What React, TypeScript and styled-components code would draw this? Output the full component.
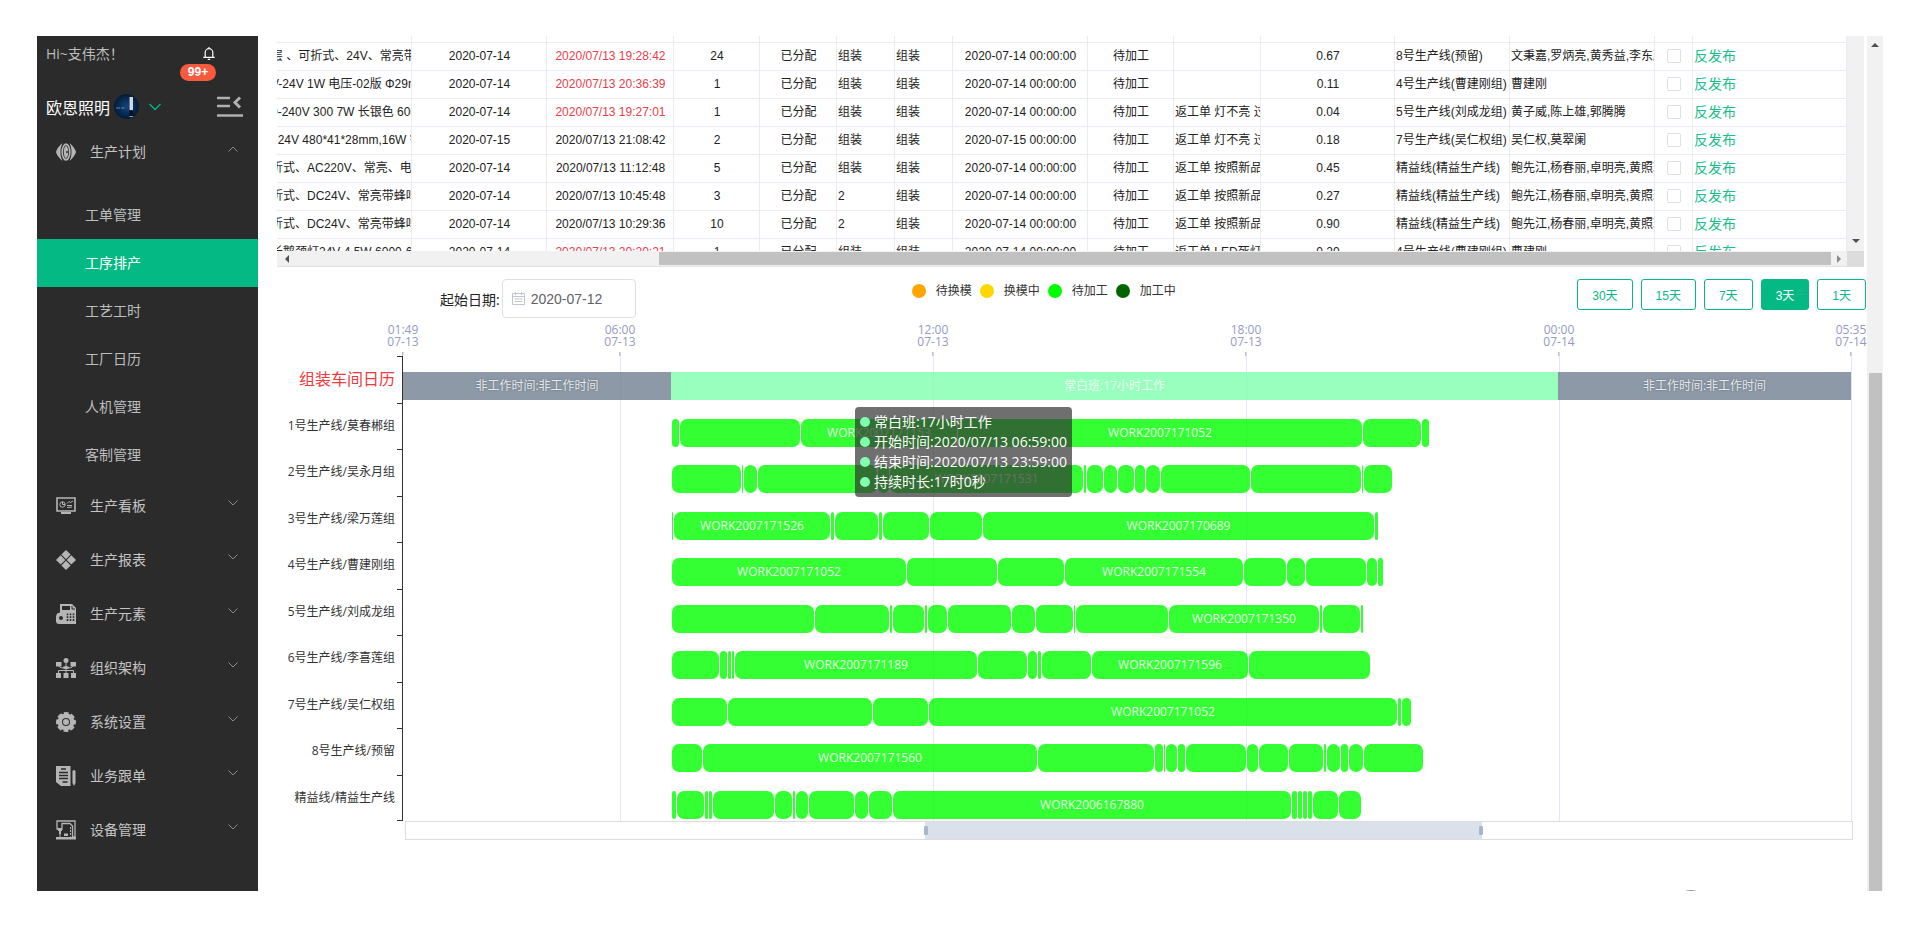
import React, { useState } from 'react';
import styled, { createGlobalStyle } from 'styled-components';

const GREEN = '#04b983';
const UI_FONT = '"Open Sans", "Noto Sans CJK SC", sans-serif';
const TABLE_FONT = '"Liberation Sans", "Noto Sans CJK SC", sans-serif';

const GlobalStyle = createGlobalStyle`
  *, *::before, *::after { box-sizing: border-box; }
  body { margin: 0; background: #fff; font-family: ${UI_FONT}; font-size: 12px; color: #222; }
  button, input { font-family: inherit; }
`;

/* ---------- shell ---------- */

const Page = styled.div`
  display: flex;
  height: 100vh;
  padding: 36px 37px 45px;
`;

const Main = styled.main`
  position: relative;
  flex: 1;
  min-width: 0;
  display: flex;
  flex-direction: column;
  padding-left: 19px;
  overflow: hidden;
`;

const FloatingDisc = styled.div`
  position: absolute;
  right: 160px;
  bottom: -31px;
  width: 32px;
  height: 32px;
  border-radius: 50%;
  background: #999;
`;

/* ---------- sidebar ---------- */

const Sidebar = styled.aside`
  flex: 0 0 221px;
  background: #2b2b2b;
  color: #bdbdbd;
  overflow: hidden;
`;

const Greeting = styled.div`
  display: flex;
  align-items: center;
  justify-content: space-between;
  height: 34px;
  padding: 0 43px 0 9px;
  font-size: 14px;
`;

const BellButton = styled.button`
  position: relative;
  display: flex;
  padding: 0;
  border: 0;
  background: none;
  color: #fff;
`;

const Badge = styled.span`
  position: absolute;
  top: 17px;
  right: -1px;
  width: 36px;
  height: 17px;
  border-radius: 9px;
  background: #f85a40;
  color: #fff;
  font: bold 12px/17px "Liberation Sans", sans-serif;
  text-align: center;
`;

const Company = styled.div`
  display: flex;
  align-items: center;
  height: 55px;
  padding: 18px 15px 0 9px;
  color: #fff;
  font-size: 16px;
  line-height: 24px;
`;

const CompanyButton = styled.button`
  display: flex;
  align-items: center;
  gap: 4px;
  margin-right: auto;
  padding: 0;
  border: 0;
  background: none;
  color: inherit;
  font-size: 16px;

  svg:last-child { margin-left: 6px; }
`;

const PlainButton = styled.button`
  display: flex;
  padding: 0;
  border: 0;
  background: none;
  color: #b0b0b0;
`;

const MenuGroup = styled.a`
  display: flex;
  align-items: center;
  height: 54px;
  padding: 0 19px;
  color: #c4c4c4;
  font-size: 14px;
  text-decoration: none;
`;

const MenuText = styled.span`
  flex: 1;
  margin-left: 14px;
  padding-bottom: 2px;
`;

const MenuArrow = styled.svg`
  margin-bottom: 6px;
`;

const SubMenu = styled.nav`
  padding: 12px 0 0;
`;

const SubItem = styled.a<{ $active?: boolean }>`
  display: block;
  padding: 1px 0 1px 48px;
  background: ${(p) => (p.$active ? GREEN : 'transparent')};
  color: ${(p) => (p.$active ? '#fff' : '#bdbdbd')};
  font-size: 14px;
  line-height: 46px;
  text-decoration: none;
`;

/* ---------- table ---------- */

const TablePanel = styled.section`
  display: grid;
  grid-template-columns: 1fr 17px;
  grid-template-rows: 215px 15px;
  margin-right: 3px;
  border-bottom: 1px solid #e2e2e2;
`;

const TableClip = styled.div`
  display: flex;
  justify-content: flex-end;
  min-width: 0;
  overflow: hidden;
`;

const OrderTable = styled.table`
  flex: none;
  width: calc(100% + 7px);
  align-self: flex-start;
  border-collapse: separate;
  border-spacing: 0;
  table-layout: fixed;
  font-family: ${TABLE_FONT};
  font-size: 12px;
  color: #222;
`;

const Cell = styled.td<{ $center?: boolean; $late?: boolean }>`
  height: 28px;
  padding: 0 0 2px 1px;
  border-right: 1px solid #ebebf4;
  border-bottom: 1px solid #ebebf4;
  overflow: hidden;
  white-space: nowrap;
  line-height: 20px;
  text-align: ${(p) => (p.$center ? 'center' : 'left')};
  color: ${(p) => (p.$late ? '#e8404a' : 'inherit')};
`;

const PrecedingRow = styled.tr`
  td { height: 7px; padding: 0; }
`;

const Tick = styled.input`
  appearance: none;
  display: block;
  width: 14px;
  height: 14px;
  margin: 0 auto;
  border: 1px solid #dcdfe6;
  border-radius: 2px;
  background: #fff;
`;

const LinkButton = styled.button`
  display: block;
  padding: 0;
  border: 0;
  background: none;
  color: #19bd8b;
  font-size: 14px;
  line-height: 20px;
`;

const VScroll = styled.div`
  display: flex;
  flex-direction: column;
  justify-content: flex-end;
  align-items: center;
  padding-bottom: 6px;
  background: #f1f1f1;
`;

const HScroll = styled.div`
  display: flex;
  align-items: center;
  background: #f1f1f1;
`;

const HThumb = styled.div`
  flex: 1172;
  height: 13px;
  background: #c1c1c1;
`;

const HLead = styled.div`
  flex: 376;
  padding-left: 6px;
  display: flex;
`;

const HEnd = styled.div`
  flex: 0 0 16px;
  display: flex;
  justify-content: center;
`;

const Corner = styled.div`
  background: #dcdcdc;
`;

const PageScroll = styled.div`
  flex: 0 0 16px;
  display: flex;
  flex-direction: column;
  align-items: center;
  background: #f1f1f1;
`;

const PageScrollLead = styled.div`
  flex: 334;
  padding-top: 5px;
  display: flex;
  align-items: flex-start;
`;

const PageThumb = styled.div`
  flex: 520;
  width: 13px;
  background: #c1c1c1;
`;

/* ---------- toolbar ---------- */

const Toolbar = styled.div`
  display: flex;
  align-items: flex-start;
  height: 57px;
  padding: 12px 0 0 163px;
`;

const Spacer = styled.div<{ $grow: number }>`
  flex: ${(p) => p.$grow};
`;

const DateField = styled.div`
  display: flex;
  align-items: center;
  gap: 2px;
  height: 39px;
  font-size: 14px;
`;

const DateBox = styled.div`
  display: flex;
  align-items: center;
  gap: 6px;
  width: 134px;
  height: 39px;
  padding-left: 9px;
  border: 1px solid #dcdfe6;
  border-radius: 4px;
  color: #606266;
`;

const DateInput = styled.input`
  width: 90px;
  padding: 0;
  border: 0;
  outline: 0;
  background: none;
  color: #606266;
  font-family: "Liberation Sans", sans-serif;
  font-size: 14px;
`;

const Legend = styled.ul`
  display: flex;
  gap: 8px;
  margin: 0;
  padding: 0;
  list-style: none;
`;

const LegendItem = styled.li<{ $color: string }>`
  display: flex;
  align-items: center;
  gap: 10px;
  line-height: 24px;
  color: #333;

  &::before {
    content: "";
    width: 14px;
    height: 14px;
    border-radius: 50%;
    background: ${(p) => p.$color};
  }
`;

const RangeButtons = styled.div`
  display: flex;
  gap: 8px;
  margin-right: 1px;
`;

const RangeButton = styled.button<{ $active: boolean }>`
  height: 31px;
  padding: 0 14px;
  border: 1px solid ${GREEN};
  border-radius: 3px;
  background: ${(p) => (p.$active ? GREEN : '#fff')};
  color: ${(p) => (p.$active ? '#fff' : GREEN)};
  font-family: ${TABLE_FONT};
  font-size: 12px;
  white-space: nowrap;
`;

/* ---------- gantt chart ---------- */

const Chart = styled.section`
  display: grid;
  grid-template-columns: 126px 1fr;
  grid-template-rows: 32px 465px;
  padding-right: 16px;
`;

const TimeAxis = styled.div`
  grid-column: 2;
  position: relative;
`;

const TimeLabel = styled.div`
  position: absolute;
  top: 0;
  bottom: 0;
  transform: translateX(-50%);
  color: #9599c4;
  line-height: 12px;
  text-align: center;
  white-space: pre;

  &::after {
    content: "";
    display: block;
    width: 1px;
    height: 4px;
    margin: 4px auto 0;
    background: #9599c4;
  }
`;

const LineLabels = styled.div`
  display: flex;
  flex-direction: column;
  border-right: 1px solid #333;
`;

const LineLabel = styled.div<{ $title?: boolean }>`
  position: relative;
  flex: 1;
  padding: 14px 7px 0 0;
  color: ${(p) => (p.$title ? '#ee3b40' : '#333')};
  font-size: ${(p) => (p.$title ? 16 : 12)}px;
  line-height: 18px;
  text-align: right;
  white-space: nowrap;

  &::before, &:last-child::after {
    content: "";
    position: absolute;
    top: 0;
    right: 0;
    width: 5px;
    height: 1px;
    background: #333;
  }
  &:last-child::after { top: auto; bottom: 0; }
`;

const Plot = styled.div`
  position: relative;
  display: flex;
  flex-direction: column;
`;

const GridLine = styled.div`
  position: absolute;
  top: 0;
  bottom: 0;
  width: 1px;
  background: #e6e6fa;
`;

const Track = styled.div`
  position: relative;
  flex: 1;
  display: flex;
  padding-top: 16px;
`;

const Shift = styled.div<{ $working?: boolean }>`
  height: 28px;
  background: ${(p) => (p.$working ? 'rgba(128, 255, 174, 0.8)' : 'rgba(112, 128, 144, 0.8)')};
  color: ${(p) => (p.$working ? '#e9fff1' : '#e6eaee')};
  line-height: 27px;
  text-align: center;
  text-shadow: ${(p) => (p.$working ? 'none' : '0 0 2px #56626f')};
  white-space: nowrap;
`;

const Job = styled.div`
  height: 28px;
  margin-left: 1px;
  border-radius: 7px;
  background: rgba(0, 255, 0, 0.8);
  color: #e4ffe4;
  line-height: 27px;
  text-align: center;
  white-space: nowrap;
`;

const Tooltip = styled.div`
  position: absolute;
  top: 51px;
  padding: 5px;
  border-radius: 4px;
  background: rgba(50, 50, 50, 0.7);
  color: #fff;
  font-size: 14px;
  line-height: 20px;
  white-space: nowrap;
`;

const TooltipLine = styled.div`
  display: flex;
  align-items: center;
  gap: 4px;

  &::before {
    content: "";
    width: 10px;
    height: 10px;
    border-radius: 50%;
    background: #80ffae;
  }
`;

const ZoomBar = styled.div`
  position: relative;
  display: flex;
  height: 19px;
  margin: 0 14px 0 128px;
  border: 1px solid #ddd;
`;

const ZoomWindow = styled.div`
  background: #dbe1ea;
`;

const ZoomHandle = styled.input`
  appearance: none;
  position: absolute;
  inset: 0;
  width: 100%;
  height: 100%;
  margin: 0;
  background: none;
  pointer-events: none;

  &::-webkit-slider-thumb {
    appearance: none;
    width: 4px;
    height: 9px;
    border-radius: 1px;
    background: #a7b7cc;
    pointer-events: auto;
  }
`;

/* ---------- data ---------- */

const columns = [142, 135, 127, 86, 77, 58, 58, 135, 86, 87, 134, 115, 145, 38];

type Order = [string, string, string, boolean, string, string, string, string, string, string, string];

const orders: Order[] = [
  ['层 、可折式、24V、常亮带蜂鸣', '2020-07-14', '2020/07/13 19:28:42', true, '24', '组装', '2020-07-14', '', '0.67', '8号生产线(预留)', '文秉嘉,罗炳亮,黄秀益,李东蔚'],
  ['V-24V 1W 电压-02版 Φ29mm', '2020-07-14', '2020/07/13 20:36:39', true, '1', '组装', '2020-07-14', '', '0.11', '4号生产线(曹建刚组)', '曹建刚'],
  ['0-240V 300 7W 长银色 6000K', '2020-07-14', '2020/07/13 19:27:01', true, '1', '组装', '2020-07-14', '返工单 灯不亮 过期', '0.04', '5号生产线(刘成龙组)', '黄子威,陈上雄,郭腾腾'],
  ['/ 24V 480*41*28mm,16W 铝材', '2020-07-15', '2020/07/13 21:08:42', false, '2', '组装', '2020-07-15', '返工单 灯不亮 过期', '0.18', '7号生产线(吴仁权组)', '吴仁权,莫翠阑'],
  ['折式、AC220V、常亮、电源线', '2020-07-14', '2020/07/13 11:12:48', false, '5', '组装', '2020-07-14', '返工单 按照新品包装', '0.45', '精益线(精益生产线)', '鲍先江,杨春丽,卓明亮,黄照琼'],
  ['折式、DC24V、常亮带蜂鸣器', '2020-07-14', '2020/07/13 10:45:48', false, '3', '2', '2020-07-14', '返工单 按照新品包装', '0.27', '精益线(精益生产线)', '鲍先江,杨春丽,卓明亮,黄照琼'],
  ['折式、DC24V、常亮带蜂鸣器', '2020-07-14', '2020/07/13 10:29:36', false, '10', '2', '2020-07-14', '返工单 按照新品包装', '0.90', '精益线(精益生产线)', '鲍先江,杨春丽,卓明亮,黄照琼'],
  ['长鹅颈灯24V 4.5W 6000-6500K', '2020-07-14', '2020/07/13 20:20:21', true, '1', '组装', '2020-07-14', '返工单 LED死灯', '0.20', '4号生产线(曹建刚组)', '曹建刚'],
];

const legend = [
  ['待换模', '#ffa500'],
  ['换模中', '#ffd700'],
  ['待加工', '#00ff00'],
  ['加工中', '#006400'],
];

/* Chart units: the visible window spans SPAN units, starting at 0. */
const SPAN = 1448;
const pct = (n: number) => `${(n / SPAN) * 100}%`;

const timeMarks: [number, string][] = [
  [0, '01:49\n07-13'],
  [217, '06:00\n07-13'],
  [530, '12:00\n07-13'],
  [843, '18:00\n07-13'],
  [1156, '00:00\n07-14'],
  [1448, '05:35\n07-14'],
];

interface Line {
  name: string;
  edges: number[];
  labels: Record<number, string>;
}

const lines: Line[] = [
  { name: '1号生产线/莫春郴组', edges: [268, 276, 397, 554, 959, 1018, 1026], labels: { 2: 'WORK2007171153', 3: 'WORK2007171052' } },
  { name: '2号生产线/吴永月组', edges: [268, 338, 340, 354, 474, 486, 680, 683, 700, 714, 731, 742, 757, 847, 958, 960, 989], labels: { 5: 'WORK2007171531' } },
  { name: '3号生产线/梁万莲组', edges: [268, 270, 427, 431, 475, 479, 526, 579, 971, 975], labels: { 1: 'WORK2007171526', 7: 'WORK2007170689' } },
  { name: '4号生产线/曹建刚组', edges: [268, 503, 594, 661, 840, 883, 902, 963, 974, 980], labels: { 0: 'WORK2007171052', 3: 'WORK2007171554' } },
  { name: '5号生产线/刘成龙组', edges: [268, 411, 486, 489, 521, 524, 544, 608, 632, 670, 672, 765, 916, 919, 957, 960], labels: { 11: 'WORK2007171350' } },
  { name: '6号生产线/李喜莲组', edges: [268, 316, 324, 328, 331, 574, 624, 634, 638, 688, 845, 967], labels: { 4: 'WORK2007171189', 9: 'WORK2007171596' } },
  { name: '7号生产线/吴仁权组', edges: [268, 324, 469, 525, 994, 998, 1008], labels: { 3: 'WORK2007171052' } },
  { name: '8号生产线/预留', edges: [268, 299, 634, 751, 760, 762, 774, 782, 843, 855, 885, 920, 923, 937, 945, 960, 1020], labels: { 1: 'WORK2007171560' } },
  { name: '精益线/精益生产线', edges: [268, 273, 301, 305, 309, 371, 389, 392, 405, 451, 465, 489, 888, 894, 899, 904, 909, 935, 958], labels: { 11: 'WORK2006167880' } },
];

const tooltipLines = ['常白班:17小时工作', '开始时间:2020/07/13 06:59:00', '结束时间:2020/07/13 23:59:00', '持续时长:17时0秒'];

/* ---------- icons ---------- */

const Arrow = ({ dir, color = '#505050' }: { dir: 'up' | 'down' | 'left' | 'right'; color?: string }) => {
  const d = { up: 'M4 2 8 6H0Z', down: 'M4 6 0 2h8Z', left: 'M2 4 6 0v8Z', right: 'M6 4 2 0v8Z' }[dir];
  return (
    <svg width="8" height="8" viewBox="0 0 8 8">
      <path d={d} fill={color} />
    </svg>
  );
};

const Chevron = ({ up }: { up?: boolean }) => (
  <MenuArrow width="12" height="8" viewBox="0 0 12 8" fill="none" stroke="#8b8b8b">
    <path d={up ? 'M1.500 6.500 6 2l4.500 4.500' : 'M1.500 1.500 6 6l4.500-4.500'} />
  </MenuArrow>
);

const icons: Record<string, React.ReactNode> = {
  plan: (
    <>
      <path d="M6.500 1C3 4 .8 7 0 10c.8 3 3 6 6.500 9C3.800 13.500 3.800 6.500 6.500 1Z" />
      <path d="M13.500 1c3.500 3 5.700 6 6.500 9-.8 3-3 6-6.500 9 2.700-5.500 2.700-12.500 0-18Z" />
      <ellipse cx="10" cy="10" rx="4.600" ry="8.800" />
      <ellipse cx="10" cy="10" rx="3" ry="6.700" fill="#2b2b2b" />
      <ellipse cx="10" cy="10" rx="2.200" ry="5.900" />
      <circle cx="11" cy="10" r="1" fill="#2b2b2b" />
    </>
  ),
  board: (
    <>
      <path d="M1 2h18v13H1Z" fill="none" stroke="#b5b5b5" strokeWidth="1.600" />
      <path d="M5 16h10v2H5Z" />
      <circle cx="6.500" cy="8.500" r="2.700" fill="none" stroke="#b5b5b5" />
      <path d="M6.500 8.500V6M6.500 8.500H9M11 7.500l2-2 1.500 1 2.500-1.500M11 9.500h5M11 11.500l5-.5" fill="none" stroke="#b5b5b5" />
    </>
  ),
  report: <path d="m10 0 4.600 4.600L10 9.200 5.400 4.600ZM4.700 5.300 9.300 10l-4.600 4.600L0 10ZM15.300 5.300 20 10l-4.700 4.600-4.600-4.600ZM10 10.800l4.600 4.600L10 20l-4.600-4.600Z" />,
  element: (
    <>
      <path d="M4 0h12l4 4v16H3a3 3 0 0 1-3-3v-4a4.500 4.500 0 0 1 4-4.400Z" />
      <path d="M6 2h8v4H6Z" fill="#2b2b2b" />
      <circle cx="5" cy="14" r="2" fill="#2b2b2b" />
      <path d="M11.500 9.500v8M14.500 9.500v8M17.500 9.500v8" stroke="#2b2b2b" strokeWidth="1.600" strokeDasharray="1.800 1" />
      <path d="M16 2v3h3" fill="none" stroke="#2b2b2b" />
    </>
  ),
  org: (
    <>
      <circle cx="10" cy="2.500" r="2.500" />
      <path d="M0 4h5.500v4.500H0ZM14.500 4H20v4.500h-5.500ZM0 15h5v5H0ZM7.500 15h5v5h-5ZM15 15h5v5h-5Z" />
      <path d="M10 5v10M3 8c1 2 3 2 7 2s6 0 7-2M2.500 15v-2.500h15V15" fill="none" stroke="#b5b5b5" />
      <ellipse cx="10" cy="9.500" rx="3" ry="1.500" />
    </>
  ),
  gear: (
    <>
      <circle cx="10" cy="10" r="8.400" />
      <circle cx="10" cy="10" r="8.800" fill="none" stroke="#b5b5b5" strokeWidth="2.400" strokeDasharray="4.800 2.111" strokeDashoffset="2.400" />
      <circle cx="10" cy="10" r="4" fill="#2b2b2b" />
      <circle cx="10" cy="10" r="3" />
    </>
  ),
  docs: (
    <>
      <path d="M0 0h14.500v20H5l-5-4Z" />
      <path d="M5 3h5M3 6.500h9M3 9.500h9M3 12.500h9M6.500 16h5" stroke="#2b2b2b" strokeWidth="1.300" />
      <path d="M16.500 5.500a1.500 1.500 0 0 1 3 0V17L18 20l-1.500-3Z" />
    </>
  ),
  machine: (
    <>
      <path d="M1 1h18v16h-2.500V6L14 3.500H6V9H1Z" fill="none" stroke="#b5b5b5" strokeWidth="1.300" />
      <path d="M2 8h4v3H5v3H3v-3H2ZM0 17h20v2.500H0ZM8 13.500h4V16H8Z" />
      <path d="M4 11.500V17" stroke="#b5b5b5" />
      <path d="M14.500 7v9.500" stroke="#b5b5b5" strokeDasharray="2 1" />
    </>
  ),
};

const MenuIcon = ({ name }: { name: string }) => (
  <svg width="20" height="20" viewBox="0 0 20 20" fill="#b5b5b5">
    {icons[name]}
  </svg>
);

const Bell = () => (
  <svg width="12" height="13" viewBox="0 0 12 13" fill="none" stroke="currentColor" strokeWidth="1.200">
    <path d="M2.200 10V5.500a3.800 3.800 0 0 1 7.600 0V10M.3 10.400h11.400M6 0v1.600M4.800 12.300h2.400" />
  </svg>
);

const Avatar = () => (
  <svg width="25" height="25" viewBox="0 0 25 25">
    <defs>
      <radialGradient id="lamp">
        <stop offset="0" stopColor="#12467c" />
        <stop offset="1" stopColor="#041a38" />
      </radialGradient>
    </defs>
    <circle cx="12.500" cy="12.500" r="12.500" fill="url(#lamp)" />
    <path d="M2 14h4M7 14h3.500" stroke="#5f86ad" />
    <path d="M15.500 3h3.500v13h-3.500Z" fill="#cfd8e2" />
    <path d="M15.500 4v12" stroke="#6a7d92" />
    <path d="M15.500 17h3.500v5h-3.500Z" fill="#061224" />
    <path d="M15.500 22.500h3.500" stroke="#8fa3b8" />
  </svg>
);

const FoldIcon = () => (
  <svg width="26" height="21" viewBox="0 0 26 21" fill="none" stroke="currentColor" strokeWidth="2.600">
    <path d="M0 2h13M0 10h13M0 19.500h26" />
    <path d="M23 1.500 18 6.500l5 5" strokeWidth="3" />
  </svg>
);

const CalendarIcon = () => (
  <svg width="13" height="13" viewBox="0 0 13 13" fill="none" stroke="#c0c4cc">
    <path d="M.5 1.500h12v11H.5ZM.5 4.500h12M3.500 0v3M9.500 0v3M2.500 7h8M2.500 9.500h8" />
  </svg>
);

/* ---------- sections ---------- */

const subItems = ['工单管理', '工序排产', '工艺工时', '工厂日历', '人机管理', '客制管理'];
const groups = [
  ['生产看板', 'board'],
  ['生产报表', 'report'],
  ['生产元素', 'element'],
  ['组织架构', 'org'],
  ['系统设置', 'gear'],
  ['业务跟单', 'docs'],
  ['设备管理', 'machine'],
];

const SideMenu = () => (
  <Sidebar>
    <Greeting>
      Hi~支伟杰！
      <BellButton aria-label="消息">
        <Bell />
        <Badge>99+</Badge>
      </BellButton>
    </Greeting>
    <Company>
      <CompanyButton>
        欧恩照明
        <Avatar />
        <svg width="12" height="8" viewBox="0 0 12 8" fill="none" stroke={GREEN} strokeWidth="1.300">
          <path d="m.5 1 5.500 5.500L11.500 1" />
        </svg>
      </CompanyButton>
      <PlainButton aria-label="收起菜单">
        <FoldIcon />
      </PlainButton>
    </Company>
    <MenuGroup href="#plan">
      <MenuIcon name="plan" />
      <MenuText>生产计划</MenuText>
      <Chevron up />
    </MenuGroup>
    <SubMenu>
      {subItems.map((text) => (
        <SubItem key={text} href="#plan" $active={text === '工序排产'}>
          {text}
        </SubItem>
      ))}
    </SubMenu>
    {groups.map(([text, icon]) => (
      <MenuGroup key={text} href={`#${icon}`}>
        <MenuIcon name={icon} />
        <MenuText>{text}</MenuText>
        <Chevron />
      </MenuGroup>
    ))}
  </Sidebar>
);

const OrderRow = ({ order }: { order: Order }) => {
  const [spec, due, planned, late, count, process, delivery, note, hours, line, workers] = order;
  return (
    <tr>
      <Cell>{spec}</Cell>
      <Cell $center>{due}</Cell>
      <Cell $center $late={late}>{planned}</Cell>
      <Cell $center>{count}</Cell>
      <Cell $center>已分配</Cell>
      <Cell>{process}</Cell>
      <Cell>组装</Cell>
      <Cell $center>{delivery} 00:00:00</Cell>
      <Cell $center>待加工</Cell>
      <Cell>{note}</Cell>
      <Cell $center>{hours}</Cell>
      <Cell>{line}</Cell>
      <Cell>{workers}</Cell>
      <Cell>
        <Tick type="checkbox" aria-label="选择" />
      </Cell>
      <Cell>
        <LinkButton>反发布</LinkButton>
      </Cell>
    </tr>
  );
};

const OrderPanel = () => (
  <TablePanel>
    <TableClip>
      <OrderTable>
        <colgroup>
          {columns.map((width, i) => (
            <col key={i} width={width} />
          ))}
          <col />
        </colgroup>
        <tbody>
          <PrecedingRow>
            {[...columns, 0].map((_, i) => (
              <Cell key={i} />
            ))}
          </PrecedingRow>
          {orders.map((order, i) => (
            <OrderRow key={i} order={order} />
          ))}
        </tbody>
      </OrderTable>
    </TableClip>
    <VScroll>
      <Arrow dir="down" />
    </VScroll>
    <HScroll>
      <HLead>
        <Arrow dir="left" />
      </HLead>
      <HThumb />
      <HEnd>
        <Arrow dir="right" color="#8a8a8a" />
      </HEnd>
    </HScroll>
    <Corner />
  </TablePanel>
);

const ChartToolbar = () => {
  const [range, setRange] = useState('3天');
  return (
    <Toolbar>
      <DateField>
        <label htmlFor="start-date">起始日期:</label>
        <DateBox>
          <CalendarIcon />
          <DateInput id="start-date" defaultValue="2020-07-12" />
        </DateBox>
      </DateField>
      <Spacer $grow={11} />
      <Legend>
        {legend.map(([text, color]) => (
          <LegendItem key={text} $color={color}>
            {text}
          </LegendItem>
        ))}
      </Legend>
      <Spacer $grow={16} />
      <RangeButtons>
        {['30天', '15天', '7天', '3天', '1天'].map((text) => (
          <RangeButton key={text} $active={text === range} onClick={() => setRange(text)}>
            {text}
          </RangeButton>
        ))}
      </RangeButtons>
    </Toolbar>
  );
};

const JobTrack = ({ line }: { line: Line }) => (
  <Track style={{ paddingLeft: pct(line.edges[0]) }}>
    {line.edges.slice(1).map((end, i) => (
      <Job key={end} style={{ flex: `0 0 calc((100% * ${end - line.edges[i]}) / ${SPAN - line.edges[0]} - 1px)` }}>
        {line.labels[i]}
      </Job>
    ))}
  </Track>
);

const GanttChart = () => (
  <Chart>
    <TimeAxis>
      {timeMarks.map(([at, text]) => (
        <TimeLabel key={at} style={{ left: pct(at) }}>
          {text}
        </TimeLabel>
      ))}
    </TimeAxis>
    <LineLabels>
      <LineLabel $title>组装车间日历</LineLabel>
      {lines.map((line) => (
        <LineLabel key={line.name}>{line.name}</LineLabel>
      ))}
    </LineLabels>
    <Plot>
      {timeMarks.slice(1).map(([at]) => (
        <GridLine key={at} style={{ left: pct(at) }} />
      ))}
      <Track>
        <Shift style={{ width: pct(268) }}>非工作时间:非工作时间</Shift>
        <Shift $working style={{ width: pct(887) }}>常白班:17小时工作</Shift>
        <Shift style={{ width: pct(293) }}>非工作时间:非工作时间</Shift>
      </Track>
      {lines.map((line) => (
        <JobTrack key={line.name} line={line} />
      ))}
      <Tooltip style={{ left: pct(452) }}>
        {tooltipLines.map((text) => (
          <TooltipLine key={text}>{text}</TooltipLine>
        ))}
      </Tooltip>
    </Plot>
  </Chart>
);

const ChartZoom = () => {
  const [from, setFrom] = useState(35.9);
  const [to, setTo] = useState(74.4);
  return (
    <ZoomBar>
      <ZoomWindow style={{ marginLeft: `${from}%`, width: `${to - from}%` }} />
      <ZoomHandle type="range" step="0.1" aria-label="开始" value={from} onChange={(e) => setFrom(+e.target.value)} />
      <ZoomHandle type="range" step="0.1" aria-label="结束" value={to} onChange={(e) => setTo(+e.target.value)} />
    </ZoomBar>
  );
};

export default function App() {
  return (
    <>
      <GlobalStyle />
      <Page>
        <SideMenu />
        <Main>
          <OrderPanel />
          <ChartToolbar />
          <GanttChart />
          <ChartZoom />
          <FloatingDisc />
        </Main>
        <PageScroll>
          <PageScrollLead>
            <Arrow dir="up" />
          </PageScrollLead>
          <PageThumb />
        </PageScroll>
      </Page>
    </>
  );
}
